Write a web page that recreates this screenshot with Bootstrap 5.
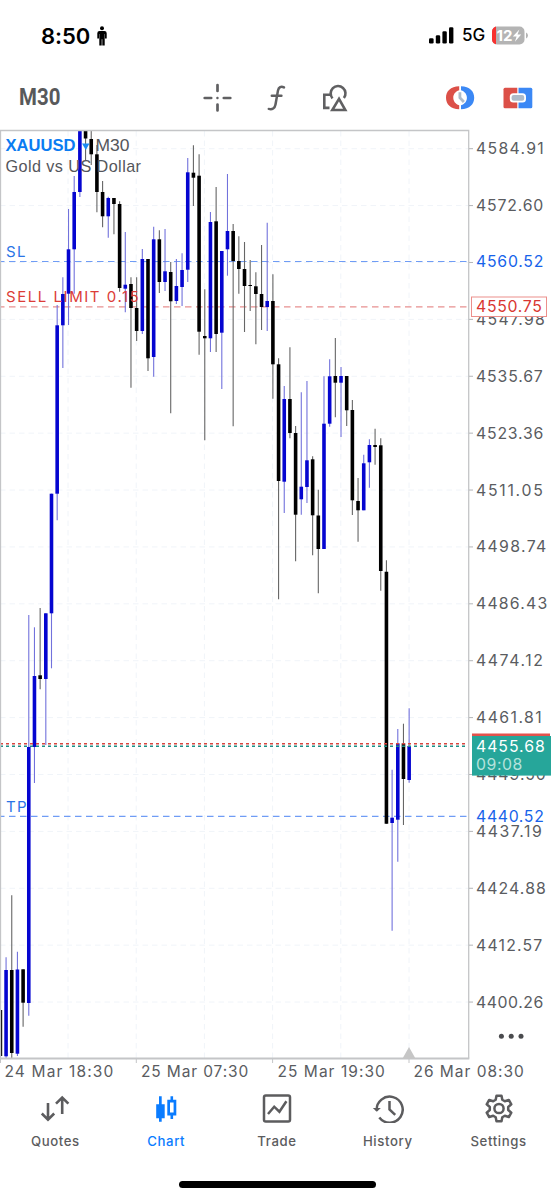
<!DOCTYPE html>
<html lang="en">
<head>
<meta charset="utf-8">
<meta name="viewport" content="width=device-width, initial-scale=1">
<title>XAUUSD M30</title>
<link href="https://cdn.jsdelivr.net/npm/bootstrap@5.3.0/dist/css/bootstrap.min.css" rel="stylesheet">
<style>
  body { font-family: Inter, "Liberation Sans", sans-serif; width: 554px; height: 1200px; overflow: hidden; color: #555; background: #fff; }
  svg { display: block; flex: none; }
  .status-bar { height: 71px; padding-left: 41px; padding-right: 26px; color: #000; }
  .clock { font-size: 22px; font-weight: 600; line-height: 1; letter-spacing: -.05px; }
  .network { font-size: 17px; font-weight: 500; line-height: 1; letter-spacing: -.1px; }
  .tool-bar { height: 54px; padding-left: 19px; padding-right: 21px; }
  .period { font: 700 23.5px/1 Roboto, sans-serif; color: #58595b; width: 183px; }
  .period span { display: inline-block; transform: scaleX(.87); transform-origin: left; }
  .tab-strip { height: 83px; padding-top: 8px; }
  .tab-strip .nav-link { padding: 0; color: #5c5c5e; font-size: 13.2px; font-weight: 500; letter-spacing: .6px; line-height: 16px; }
  .tab-strip .nav-link.active { color: #0a7cff; }
  .tab-strip svg { margin: 0 auto 10px; }
  .home-bar { width: 197px; height: 7px; background: #000; margin-top: 12.5px; }
  .axis-text { font: 400 15.8px Inter, sans-serif; letter-spacing: 1.2px; fill: #5a5c61; }
  .title-text { font: 400 16.2px "Liberation Sans", sans-serif; fill: #54565b; }
</style>
</head>
<body>
<header>
  <div class="status-bar d-flex align-items-center">
    <span class="clock">8:50</span>
    <svg style="margin-left:7px" width="10" height="20" viewBox="0 0 10 20" fill="#000"><circle cx="5" cy="2.2" r="2"/><path d="M2.6 5h4.8Q9.7 5 9.7 7.2v5.4H8V8h-.3v11.6H5.3v-6.4h-.6v6.4H2.3V8H2v4.6H.3V7.2Q.3 5 2.6 5z"/></svg>
    <svg class="ms-auto" width="25" height="17" viewBox="0 0 25 17"><rect y="11.3" width="4.6" height="5.3" rx="1.3"/><rect x="6.8" y="8.3" width="4.4" height="8.3" rx="1.3"/><rect x="13.4" y="4.3" width="4.4" height="12.3" rx="1.3"/><rect x="20" y=".3" width="4.4" height="16.3" rx="1.3"/></svg>
    <span class="network ms-2">5G</span>
    <svg style="margin-left:7px" width="36" height="19" viewBox="0 0 36 19"><clipPath id="cell"><rect width="32.5" height="18" y=".5" rx="5"/></clipPath><g clip-path="url(#cell)"><path fill="#b4b4b4" d="M0 0h33v19H0z"/><path fill="#f8312f" d="M0 0h4v19H0z"/></g><path d="M34 6.5q2 1 2 3t-2 3z" fill="#b4b4b4"/><text x="4.5" y="15" font-size="14.5" font-weight="700" fill="#fff" textLength="16" lengthAdjust="spacingAndGlyphs">12</text><path fill="#fff" d="M27.4 3.5 20.8 10.5h3.8l-1.7 5.2 6.3-7.2h-3.7z"/></svg>
  </div>
  <nav class="tool-bar d-flex align-items-center">
    <span class="period"><span>M30</span></span>
    <svg width="30" height="30" viewBox="0 0 30 30" stroke="#606062" stroke-width="2.7" stroke-linecap="round"><path d="M15.5 2v6M15.5 21.5v6M2.700 15h6.500M21.800 15h6.500"/><path stroke-width="2.4" d="M15.400 15h.1"/></svg>
    <svg style="margin-left:35px" width="19" height="28" viewBox="0 0 19 28" fill="none" stroke="#606062" stroke-width="2.5" stroke-linecap="round"><path d="M17 3.400c-3-1.600-5.300-.3-6 3L8.500 20.500c-.7 3.800-3.200 5.300-6.700 4.400M4.800 11.800h9.600"/></svg>
    <svg style="margin-left:35px" width="28" height="30" viewBox="0 0 28 30" fill="none" stroke="#606062" stroke-width="2.6"><path d="M9 11.800H3.300v13.100h5.200M11.500 15.300a7.400 7.400 0 1 1 11.400-.3"/><path d="M18 15.800 11.300 27h13z"/></svg>
    <svg class="ms-auto" width="30" height="26" viewBox="0 0 30 26"><path fill="#dc5048" d="M14.2 1.2C5.500 1.200 1 6.400 1 12.700s4.500 11.500 13.200 11.500v-4C10 18.800 8.300 15.800 8.300 12.700S10 6.600 14.200 5.200z"/><path fill="#3b88f5" d="M16 1.200c8.700 0 13.200 5.200 13.200 11.500S24.700 24.200 16 24.200v-4c4.200-1.400 5.900-4.400 5.900-7.500S20.200 6.600 16 5.200z"/><path d="M14.900 7.200v5.600l4 4.200" fill="none" stroke="#aebbc9" stroke-width="2.800"/></svg>
    <svg style="margin-left:28px" width="30" height="22" viewBox="0 0 30 22"><path fill="#dc5048" d="M2 .7h12.300v20.500H2q-1.500 0-1.500-1.500V2.200Q.5.7 2 .7z"/><path fill="#3b88f5" d="M15.500.7h12.300q1.500 0 1.500 1.500v17.500q0 1.500-1.500 1.500H15.500z"/><rect x="6.800" y="6.300" width="16.200" height="9.200" rx="3.500" fill="#fff"/><rect x="8.600" y="8" width="12.600" height="5.800" rx="2" fill="#aebbc9"/></svg>
  </nav>
</header>

<main>
  <svg id="chart" width="554" height="960" viewBox="0 125 554 960">
    <defs><clipPath id="plot"><rect x="0" y="131" width="468" height="927"/></clipPath></defs>
    <g id="grid" stroke="#f0f4f9" stroke-width="1" stroke-dasharray="5.5 4" fill="none"></g>
    <g fill="none">
      <path d="M0 261.500H468" stroke="#6f9cf5" stroke-width="1.200" stroke-dasharray="6.500 4.500" stroke-dashoffset="2"/>
      <path d="M0 306.800H468" stroke="#e89090" stroke-width="1.200" stroke-dasharray="6.500 4.500" stroke-dashoffset="2"/>
      <path d="M0 816.400H468" stroke="#6f9cf5" stroke-width="1.200" stroke-dasharray="6.500 4.500" stroke-dashoffset="2"/>
    </g>
    <g id="candles" clip-path="url(#plot)"></g>
    <g class="title-text">
      <text x="5.500" y="151" style="fill:#0a7cf2;font-weight:700" textLength="70" lengthAdjust="spacingAndGlyphs">XAUUSD</text>
      <path d="M82 143.500h7.500l-3.700 6.500z" fill="#1b8cf5"/>
      <text x="95.500" y="151" textLength="34" lengthAdjust="spacingAndGlyphs">M30</text>
      <text x="5.500" y="171.800" textLength="135.500">Gold vs US Dollar</text>
    </g>
    <g class="axis-text" style="font-size:15px;letter-spacing:1.300px">
      <text x="6" y="256.500" style="fill:#2a74e6">SL</text>
      <text x="6" y="301.800" style="fill:#dc3c37" textLength="134">SELL LIMIT 0.15</text>
      <text x="6" y="811.500" style="fill:#2a74e6">TP</text>
    </g>
    <g fill="none" stroke-width="1.500" stroke-dasharray="3 3">
      <path d="M0 743.800H468" stroke="#d8453f"/>
      <path d="M0 746.200H468" stroke="#1d8f86"/>
    </g>
    <path d="M.5 1058V130.500H468.700V1058.500" fill="none" stroke="#c4c5c7" stroke-width="1.300"/>
    <path d="M0 1058.500H469.300" stroke="#c4c5c7" stroke-width="1.800"/>
    <path d="M.5 1059v4M136.300 1059v4M272.600 1059v4M409 1059v4" stroke="#c4c5c7"/>
    <path d="M409 1047l6.500 11.500h-13z" fill="#c6c6c6"/>
    <g id="prices" class="axis-text"></g>
    <text class="axis-text" x="476" y="267" textLength="68.500" style="fill:#1763ea">4560.52</text>
    <rect x="471.500" y="297" width="75" height="19.500" fill="#fff" stroke="#ec8f8b"/>
    <text class="axis-text" x="476" y="312.300" textLength="67" style="fill:#d93631">4550.75</text>
    <rect x="472" y="733.500" width="78" height="5" fill="#e2524c"/>
    <rect x="472" y="736" width="79" height="39.600" fill="#26a69a"/>
    <text class="axis-text" x="476" y="751.500" textLength="70" style="fill:#fff">4455.68</text>
    <text class="axis-text" x="476" y="770" textLength="47.500" style="fill:#b5e2dc">09:08</text>
    <text class="axis-text" x="476" y="821.800" textLength="69" style="fill:#1763ea">4440.52</text>
    <g fill="#4a4b4e"><circle cx="501.400" cy="1036.300" r="2.500"/><circle cx="511.200" cy="1036.300" r="2.500"/><circle cx="521" cy="1036.300" r="2.500"/></g>
    <g class="axis-text" style="font-size:15.500px">
      <text x="4.500" y="1076.500" textLength="110">24 Mar 18:30</text>
      <text x="141" y="1076.500" textLength="108.500">25 Mar 07:30</text>
      <text x="277.500" y="1076.500" textLength="108.500">25 Mar 19:30</text>
      <text x="413.500" y="1076.500" textLength="111.500">26 Mar 08:30</text>
    </g>
  </svg>
</main>

<footer>
  <ul class="nav nav-justified tab-strip">
    <li class="nav-item"><a class="nav-link" href="#"><svg width="30" height="30" viewBox="0 0 30 30" fill="none" stroke="#5c5c5e" stroke-width="2.600"><path d="M8 10v16.500M1.800 20.500 8 26.700l6.200-6.200M22.200 21V4.500M16 10.700l6.200-6.200 6.200 6.200"/></svg>Quotes</a></li>
    <li class="nav-item"><a class="nav-link active" href="#"><svg width="30" height="30" viewBox="0 0 30 30" fill="#0a7cff"><path d="M8 3.300h2.700v7.900h3v14h-3v3.600H8v-3.600H5.200v-14H8z"/><path fill-rule="evenodd" d="M19.500 3.300h2.600v3.400h3.200v15.700h-3.200v3.500h-2.600v-3.500h-3.200V6.700h3.200zM19 9.600v10h3.600v-10z"/></svg>Chart</a></li>
    <li class="nav-item"><a class="nav-link" href="#"><svg width="30" height="30" viewBox="0 0 30 30" fill="none" stroke="#5c5c5e" stroke-width="2.500"><rect x="2" y="2.500" width="26" height="26" rx="1.800"/><path d="m6 21 6.200-7.300 5.200 5 7-10.500"/></svg>Trade</a></li>
    <li class="nav-item"><a class="nav-link" href="#"><svg width="32" height="30" viewBox="0 0 32 30" fill="none" stroke="#5c5c5e" stroke-width="2.500"><path d="M4.700 17.500A13 13 0 1 1 7.300 24.500M17.500 8v8.500l5.700 5.300"/><path fill="#5c5c5e" stroke="none" d="M.8 15h8l-4 3.800z"/></svg>History</a></li>
    <li class="nav-item"><a class="nav-link" href="#"><svg width="30" height="30" viewBox="0 0 30 30" fill="none" stroke="#5c5c5e" stroke-width="2.500" stroke-linejoin="round"><path d="M12.500 2.800h5l.8 4 2.500 1.500 4-1.300 2.500 4.300-3.100 2.700v3l3.100 2.700-2.500 4.300-4-1.300-2.500 1.500-.8 4h-5l-.8-4-2.500-1.500-4 1.300-2.500-4.300 3.100-2.700v-3l-3.100-2.700L5.200 7l4 1.300 2.500-1.500z"/><circle cx="15" cy="15.500" r="4.600"/></svg>Settings</a></li>
  </ul>
  <div class="home-bar rounded-pill mx-auto"></div>
</footer>

<script src="https://cdn.jsdelivr.net/npm/bootstrap@5.3.0/dist/js/bootstrap.bundle.min.js"></script>
<script>
  // Each bar: direction (1 = up), high, body top, body bottom, low, in chart units
  const bars = [
    [0,1010,1010,1056,1058],[1,957.3,970,1056.3,1058],[0,895.3,970,1053,1058],[1,951.7,969.5,1053.7,1056],
    [0,969.3,969.3,1002.7,1026.7],[1,615,747,1003,1015.7],[1,627.3,676,747,783],[0,608,675.3,679,689.3],
    [1,613.3,613.3,679,745],[1,493.7,493.7,613.3,668.3],[1,305,325.3,493.7,520.3],[1,277.3,294,325.3,368],
    [1,209,249.3,293.7,325],[1,176,192,249.3,293.7],[1,131,131,192,197],[0,131,131,138.5,160],
    [0,131,139,154.3,165],[0,145,154.3,192,212.3],[0,181,192,216.3,227.3],[1,196.7,198,216.3,237.7],
    [0,198,198,204,234.3],[0,201.3,204,288,291.7],[1,232,284.7,288.7,312.3],[0,277.3,284,308,387.7],
    [0,277.3,308,331,341],[1,249,259,331,334],[0,259,259,358.3,371],[1,226.7,239.3,357,376.7],
    [0,230.3,239.3,282,293],[1,229,271.3,282,291],[0,262,272,301.3,413.3],[1,259,286,301,304],
    [1,253.3,270,287,306],[1,158,172.3,269.7,282],[0,145.3,172.7,177.7,206],[0,154.3,175.7,331.7,354.7],
    [0,289.3,336,338.3,440.3],[1,212,222,338.3,352],[0,187,221.3,334,352],[1,251,251,332.7,389],
    [1,174,231,249.3,275.7],[0,224,231,261,426.3],[0,236.3,261,269,293.7],[0,242,269,286,332],
    [0,260,285,286,311],[0,272.3,286.3,294,344.3],[0,245,294,307,330],[1,222.7,301,307,331],
    [0,274.3,301,364.3,398.7],[0,358.3,364.3,481,599.3],[1,386,399,481.7,513],[0,347.3,399,433,438.3],
    [0,426,433,514.7,561.3],[1,392.3,486.7,499.3,514.7],[1,381,460.3,487,503],[0,456.3,459.3,515.3,555.3],
    [0,489.7,515.5,549,593.3],[1,376.3,423.7,549,549],[1,359.3,376.3,423.7,426.7],[0,338,376,382.7,417.3],
    [1,367,376,382.7,437],[0,376,376,410.3,426],[0,400,410,500.3,515],[0,478,501,510.3,541.7],
    [1,454.7,463.3,510.3,510.3],[1,439.3,445,462.3,487.7],[0,428.7,445,447,464.7],[0,438.3,445.3,571,590.7],
    [0,560.3,571.7,823.7,823.7],[1,769.7,817.7,823,930.7],[1,729,743.3,819.7,861.7],[0,723.7,743.3,779,825],
    [1,708.3,746,780,782.7]
  ];
  document.getElementById('candles').innerHTML = bars.map(([up, high, top, bottom, low], i) => {
    const x = 0.4 + i * 5.677;
    return `<path d="M${x} ${high}V${low}" stroke="${up ? '#7272dc' : '#666'}" stroke-width="1.1"/>` +
           `<path d="M${x} ${top}V${bottom}" stroke="${up ? '#0505d0' : '#000'}" stroke-width="3.6"/>`;
  }).join('');

  // Label widths per price row; 0 marks the row covered by the stop-loss price
  const widths = [69, 68.5, 0, 70, 68, 68.5, 68, 71.5, 72.5, 68, 67, 71, 67, 71, 67.5, 68.5];
  let grid = '', prices = '';
  widths.forEach((width, i) => {
    const y = 148.7 + i * 56.89;
    grid += `<path d="M0 ${y}H468"/>`;
    prices += `<path d="M469 ${y}h4" stroke="#b4b5b8"/>`;
    if (width) prices += `<text x="476" y="${y + 5.5}" textLength="${width}">${(4584.91 - i * 12.31).toFixed(2)}</text>`;
  });
  for (let i = 0; i < 6; i++) grid += `<path d="M${68 + i * 68.2} 131V1058"/>`;
  document.getElementById('grid').innerHTML = grid;
  document.getElementById('prices').innerHTML = prices;
</script>
</body>
</html>
